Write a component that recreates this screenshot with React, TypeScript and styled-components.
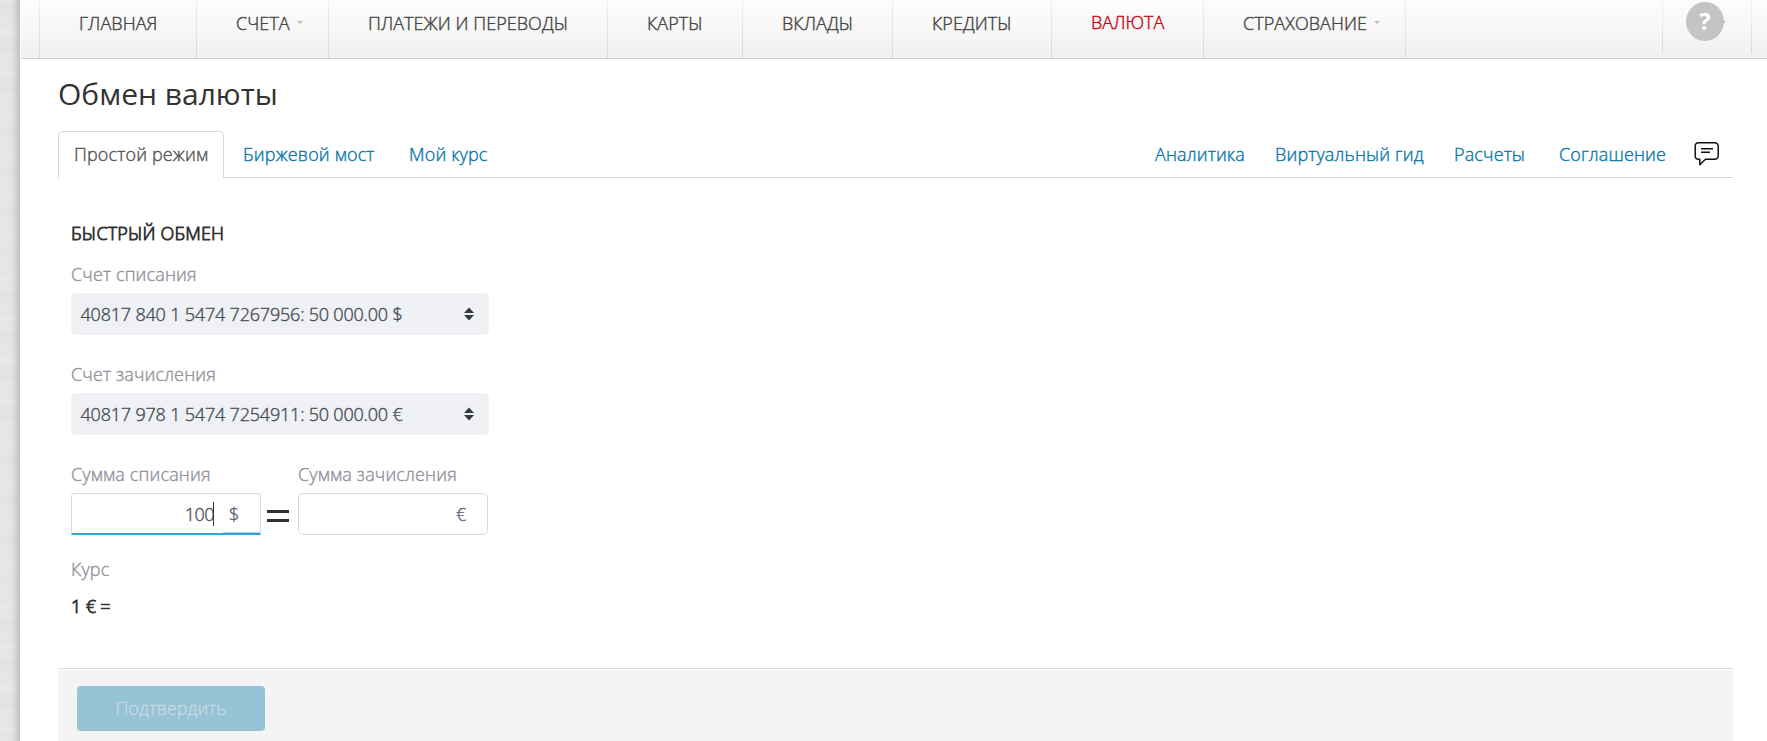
import React from 'react';
import styled, { createGlobalStyle } from 'styled-components';

const GlobalStyle = createGlobalStyle`
  *, *::before, *::after { box-sizing: border-box; }
  body {
    margin: 0;
    overflow: hidden;
    background: #fff;
    color: #333;
    font: 300 18px/24px 'Open Sans', sans-serif;
    letter-spacing: 0.15px;
    -webkit-text-stroke: 0.4px currentColor;
  }
`;

const Page = styled.div`
  display: flex;
  width: 100%;
  height: 741px;
`;

const Gutter = styled.div`
  flex: none;
  width: 20px;
  background:
    linear-gradient(90deg, transparent 9px, rgba(0, 0, 0, 0.04) 14px, rgba(0, 0, 0, 0.17) 20px),
    repeating-linear-gradient(0deg, transparent 0 7px, rgba(255, 255, 255, 0.1) 10px 13px, transparent 17px 31px, rgba(0, 0, 0, 0.01) 35px 38px, transparent 41px),
    repeating-linear-gradient(90deg, #e5e5e5 0 3px, #e7e7e7 3px 5px, #e5e5e5 5px 8px);
`;

const Main = styled.main`
  flex: 1;
  min-width: 0;
  display: flex;
  flex-direction: column;
`;

const Nav = styled.nav`
  display: flex;
  height: 59px;
  margin-left: 1px;
  padding-left: 18px;
  background: linear-gradient(#fdfdfd, #f0f0f0);
  border-bottom: 1px solid #ccc;
`;

const NavItem = styled.a<{ $width: number; $active?: boolean; $last?: boolean }>`
  display: flex;
  width: ${p => p.$width}px;
  height: 58px;
  padding: ${p => (p.$active ? 10 : 11)}px 0 0 39px;
  border: 0 solid;
  border-width: 0 ${p => (p.$last ? 1 : 0)}px 0 1px;
  border-image: linear-gradient(#f0f0f0, #d8d8d8) 1;
  color: ${p => (p.$active ? '#c9000c' : '#444')};
  letter-spacing: 0.06px;
  white-space: nowrap;
`;

const Caret = styled.i`
  width: 0;
  height: 0;
  margin: 10px 0 0 7px;
  border: 3px solid transparent;
  border-top-color: #bbb;
  border-bottom: 0;
`;

const HelpCell = styled.div`
  display: flex;
  width: 90px;
  height: 54px;
  margin: 0 15px 0 auto;
  padding: 2px 0 0 23px;
  border: 0 solid;
  border-width: 0 1px;
  border-image: linear-gradient(#f4f4f4, #d8d8d8) 1;
`;

const HelpBadge = styled.span`
  width: 38px;
  height: 39px;
  border-radius: 50%;
  background: #c4c4c4;
  color: #fff;
  font-size: 24px;
  font-weight: 700;
  line-height: 38px;
  text-align: center;
  -webkit-text-stroke: 0;
`;

const HelpTip = styled(Caret)`
  margin: 19px 0 0 -4px;
`;

const Content = styled.div`
  flex: 1;
  display: flex;
  flex-direction: column;
  padding: 15px 34px 0 38px;
`;

const Title = styled.h1`
  margin: 0;
  font-size: 30px;
  font-weight: 400;
  line-height: 40px;
  letter-spacing: 0;
  -webkit-text-stroke: 0;
`;

const Tabs = styled.div`
  display: flex;
  height: 47px;
  margin-top: 17px;
  border-bottom: 1px solid #d9d9d9;
`;

const ActiveTab = styled.a`
  width: 166px;
  height: 47px;
  padding: 10px 0 0 15px;
  border: 1px solid #d9d9d9;
  border-bottom: 0;
  border-radius: 5px 5px 0 0;
  background: #fff;
  color: #555;
`;

const TabLink = styled.a<{ $width: number }>`
  width: ${p => p.$width}px;
  padding-top: 11px;
  color: #0c78a8;
  white-space: nowrap;
`;

const ModeTabs = styled.div`
  display: flex;
  gap: 19px;
`;

const ServiceLinks = styled.div`
  display: flex;
  margin-left: auto;
  padding-right: 13px;
`;

const ChatIcon = styled.svg`
  width: 26px;
  height: 26px;
  margin-top: 10px;
`;

const Form = styled.form`
  width: 431px;
  height: 490px;
  padding: 43px 0 0 13px;
`;

const FormTitle = styled.h2`
  margin: 0 0 17px;
  font-size: 18px;
  font-weight: 300;
  line-height: 24px;
  -webkit-text-stroke-width: 0.85px;
`;

const Label = styled.div`
  height: 31px;
  color: #92939b;
  white-space: nowrap;
`;

const Select = styled.div`
  display: flex;
  justify-content: space-between;
  height: 42px;
  margin-bottom: 27px;
  padding: 9px 15px 0 9.5px;
  border-radius: 5px;
  background: #f0f1f5;
  color: #495057;
  letter-spacing: -0.19px;
`;

const SelectArrows = styled.svg`
  width: 10px;
  height: 14px;
  margin-top: 5px;
`;

const Amounts = styled.div`
  display: flex;
  margin-bottom: 22px;
`;

const AmountField = styled.div`
  width: 190px;
`;

const AmountBox = styled.div<{ $focused?: boolean }>`
  display: flex;
  justify-content: flex-end;
  height: 42px;
  padding-top: 8px;
  border: 1px solid #d6d9e6;
  border-radius: ${p => (p.$focused ? '4px 4px 0 0' : '5px')};
  ${p => p.$focused && 'border-bottom: 2px solid #35a2dc;'}
  color: #5b6478;
`;

const AmountValue = styled.span`
  height: 24px;
  color: #556;
  letter-spacing: -0.5px;
`;

const TextCaret = styled.span`
  width: 1px;
  height: 24px;
  margin-left: -1px;
  background: #334;
`;

const Currency = styled.span<{ $focused?: boolean }>`
  width: 37px;
  height: 31px;
  padding-left: 6px;
  ${p => p.$focused && 'margin-left: 9px; border-bottom: 1px solid #a5d4ee;'}
`;

const EqualsSign = styled.svg`
  width: 22px;
  height: 12px;
  margin: 48px 9px 0 6px;
`;

const Rate = styled.div`
  margin-top: 6px;
  letter-spacing: -0.15px;
  -webkit-text-stroke-width: 0.85px;
`;

const Footer = styled.footer`
  flex: 1;
  padding: 17px 19px;
  border-top: 1px solid #d9d9d9;
  background: linear-gradient(#fff 1px, #f4f4f4 1px);
`;

const Submit = styled.button`
  display: block;
  width: 188px;
  height: 45px;
  padding: 0 0 2px;
  border: 0;
  border-radius: 4px;
  background: #96c3d6;
  color: #c6d8e1;
  font: inherit;
`;

const navItems = [
  { label: 'ГЛАВНАЯ', width: 157 },
  { label: 'СЧЕТА', width: 132, menu: true },
  { label: 'ПЛАТЕЖИ И ПЕРЕВОДЫ', width: 279 },
  { label: 'КАРТЫ', width: 135 },
  { label: 'ВКЛАДЫ', width: 150 },
  { label: 'КРЕДИТЫ', width: 159 },
  { label: 'ВАЛЮТА', width: 152, active: true },
  { label: 'СТРАХОВАНИЕ', width: 203, menu: true },
];

const serviceLinks = [
  { label: 'Аналитика', width: 120 },
  { label: 'Виртуальный гид', width: 179 },
  { label: 'Расчеты', width: 105 },
  { label: 'Соглашение', width: 135 },
];

function AccountSelect({ label, value }: { label: string; value: string }) {
  return (
    <>
      <Label>{label}</Label>
      <Select>
        {value}
        <SelectArrows viewBox="0 0 10 14" fill="#343a40">
          <path d="M5 0.500 10 6H0zM0 8h10L5 13.500z" />
        </SelectArrows>
      </Select>
    </>
  );
}

export default function App() {
  return (
    <Page>
      <GlobalStyle />
      <Gutter />
      <Main>
        <Nav>
          {navItems.map((item, index) => (
            <NavItem
              key={item.label}
              $width={item.width}
              $active={item.active}
              $last={index === navItems.length - 1}
            >
              {item.label}
              {item.menu && <Caret />}
            </NavItem>
          ))}
          <HelpCell>
            <HelpBadge>?</HelpBadge>
            <HelpTip />
          </HelpCell>
        </Nav>
        <Content>
          <Title>Обмен валюты</Title>
          <Tabs>
            <ModeTabs>
              <ActiveTab>Простой режим</ActiveTab>
              <TabLink $width={147}>Биржевой мост</TabLink>
              <TabLink $width={90}>Мой курс</TabLink>
            </ModeTabs>
            <ServiceLinks>
              {serviceLinks.map(link => (
                <TabLink key={link.label} $width={link.width}>{link.label}</TabLink>
              ))}
              <ChatIcon viewBox="0 0 26 26" fill="none" stroke="#111" strokeWidth="1.5" strokeLinejoin="round">
                <path d="M4.500 1.800h16.200a3.500 3.500 0 0 1 3.500 3.500v9.400a3.500 3.500 0 0 1-3.500 3.500H11.500L5.800 23.800V18.200H4.500A3 3 0 0 1 1.200 15V5.300a3.500 3.500 0 0 1 3.300-3.500z" />
                <path d="M7 7.700h12M7 11.300h9" />
              </ChatIcon>
            </ServiceLinks>
          </Tabs>
          <Form>
            <FormTitle>БЫСТРЫЙ ОБМЕН</FormTitle>
            <AccountSelect label="Счет списания" value="40817 840 1 5474 7267956: 50 000.00 $" />
            <AccountSelect label="Счет зачисления" value="40817 978 1 5474 7254911: 50 000.00 €" />
            <Amounts>
              <AmountField>
                <Label>Сумма списания</Label>
                <AmountBox $focused>
                  <AmountValue>100</AmountValue>
                  <TextCaret />
                  <Currency $focused>$</Currency>
                </AmountBox>
              </AmountField>
              <EqualsSign viewBox="0 0 22 12" fill="#333">
                <path d="M0 0h22v3H0zM0 9h22v3H0z" />
              </EqualsSign>
              <AmountField>
                <Label>Сумма зачисления</Label>
                <AmountBox>
                  <Currency>€</Currency>
                </AmountBox>
              </AmountField>
            </Amounts>
            <Label>Курс</Label>
            <Rate>1 € =</Rate>
          </Form>
          <Footer>
            <Submit type="button">Подтвердить</Submit>
          </Footer>
        </Content>
      </Main>
    </Page>
  );
}
